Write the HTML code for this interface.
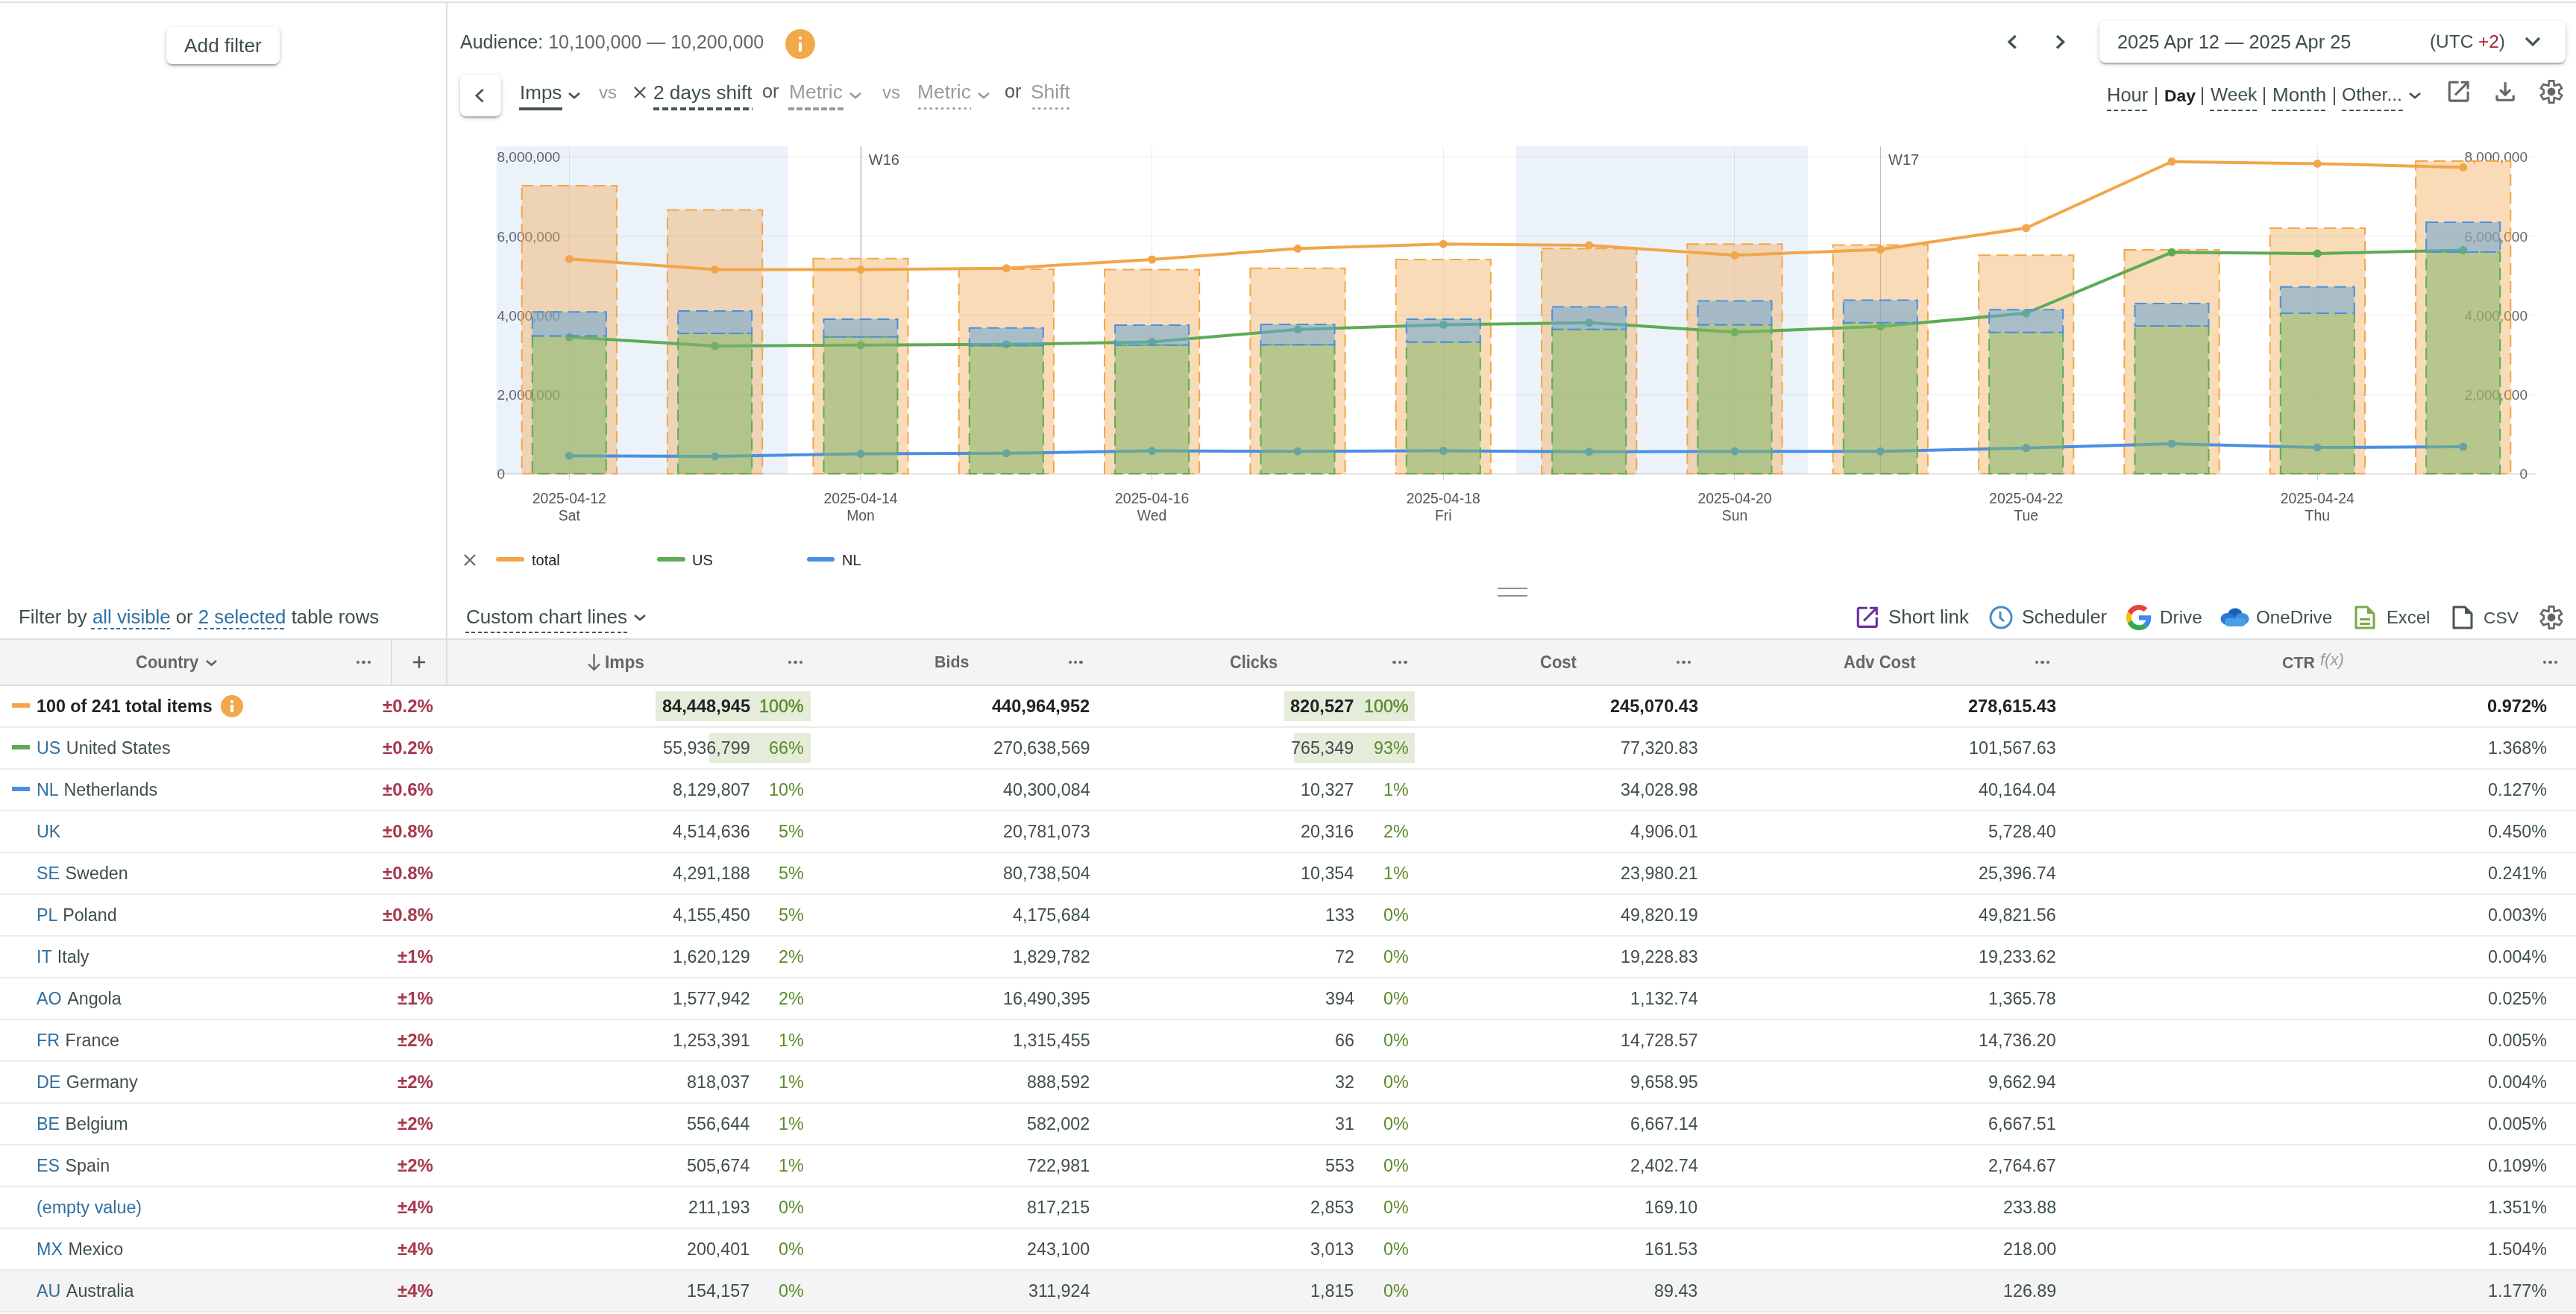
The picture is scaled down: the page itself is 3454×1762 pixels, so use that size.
<!DOCTYPE html>
<html><head><meta charset="utf-8"><style>
html,body{margin:0;padding:0;}
body{width:3454px;height:1762px;overflow:hidden;position:relative;background:#fff;font-family:"Liberation Sans", sans-serif;}
.t{position:absolute;white-space:nowrap;line-height:1;will-change:transform;}
</style></head><body>
<div style="position:absolute;left:0.0px;top:2.0px;width:3454.0px;height:2.0px;background:#dddddd;"></div>
<div style="position:absolute;left:598.0px;top:4.0px;width:2.0px;height:916.0px;background:#dedede;"></div>
<div style="position:absolute;left:223.0px;top:36.0px;width:152.0px;height:50.0px;background:#fff;border-radius:8px;box-shadow:0 2px 6px rgba(0,0,0,.2),0 2px 2px rgba(0,0,0,.14),0 4px 2px -2px rgba(0,0,0,.12);"></div>
<div class="t" style="left:247.0px;top:47.7px;font-size:26.3px;color:#3f4e4e;">Add filter</div>
<div class="t" style="left:616.5px;top:43.8px;font-size:25px;color:#3f4e4e;">Audience: <span style="color:#666">10,100,000 — 10,200,000</span></div>
<div style="position:absolute;left:1053px;top:39px;width:40px;height:40px;border-radius:50%;background:#f2a94a;"></div>
<div style="position:absolute;left:1070.9px;top:56.9px;width:4.2px;height:12.3px;background:#fff;"></div>
<div style="position:absolute;left:1070.9px;top:49px;width:4.2px;height:4.2px;border-radius:50%;background:#fff;"></div>
<svg style="position:absolute;left:2687.7px;top:41.8px" width="20.6" height="28.4"><path d="M14.6,6 L6,14.2 L14.6,22.4" fill="none" stroke="#455454" stroke-width="3.4" stroke-linecap="butt" stroke-linejoin="miter"/></svg>
<svg style="position:absolute;left:2751.7px;top:41.8px" width="20.6" height="28.4"><path d="M6,6 L14.6,14.2 L6,22.4" fill="none" stroke="#455454" stroke-width="3.4" stroke-linecap="butt" stroke-linejoin="miter"/></svg>
<div style="position:absolute;left:2815.0px;top:28.0px;width:625.0px;height:56.0px;background:#fff;border-radius:8px;box-shadow:0 2px 6px rgba(0,0,0,.2),0 2px 2px rgba(0,0,0,.14),0 4px 2px -2px rgba(0,0,0,.12);"></div>
<div class="t" style="left:2839.3px;top:43.5px;font-size:25.4px;color:#3f4e4e;">2025 Apr 12 — 2025 Apr 25</div>
<div class="t" style="left:3258.0px;top:44.3px;font-size:24.4px;color:#3f4e4e;">(UTC <span style="color:#a8202e">+2</span>)</div>
<svg style="position:absolute;left:3381.0px;top:45.0px" width="30" height="21.0"><path d="M6,6 L15,15.0 L24,6" fill="none" stroke="#455454" stroke-width="3.2" stroke-linecap="butt" stroke-linejoin="miter"/></svg>
<div style="position:absolute;left:616.5px;top:100.0px;width:55.0px;height:56.0px;background:#fff;border-radius:8px;box-shadow:0 2px 6px rgba(0,0,0,.2),0 2px 2px rgba(0,0,0,.14),0 4px 2px -2px rgba(0,0,0,.12);"></div>
<svg style="position:absolute;left:633.2px;top:113.8px" width="20.6" height="28.4"><path d="M14.6,6 L6,14.2 L14.6,22.4" fill="none" stroke="#455454" stroke-width="2.8" stroke-linecap="butt" stroke-linejoin="miter"/></svg>
<div class="t" style="left:696.5px;top:110.7px;font-size:26px;color:#3f4e4e;">Imps</div>
<div style="position:absolute;left:696.0px;top:144.2px;width:58.0px;height:3.5px;background:#455454;"></div>
<svg style="position:absolute;left:757.0px;top:118.5px" width="26" height="18"><path d="M6,6 L13,12 L20,6" fill="none" stroke="#455454" stroke-width="2.7" stroke-linecap="butt" stroke-linejoin="miter"/></svg>
<div class="t" style="left:802.8px;top:112.4px;font-size:24px;color:#9a9a9a;">vs</div>
<svg style="position:absolute;left:849px;top:115px" width="18" height="18"><path d="M2,2 L16,16 M16,2 L2,16" stroke="#555" stroke-width="2.4"/></svg>
<div class="t" style="left:876.0px;top:110.5px;font-size:26.2px;color:#3f4e4e;">2 days shift</div>
<div style="position:absolute;left:876.0px;top:144.2px;width:132.6px;height:3.5px;background:repeating-linear-gradient(90deg,#455454 0 8.5px,transparent 8.5px 12.0px);"></div>
<div class="t" style="left:1022.0px;top:109.9px;font-size:25.2px;color:#555;">or</div>
<div class="t" style="left:1058.0px;top:110.3px;font-size:26.4px;color:#9a9a9a;">Metric</div>
<div style="position:absolute;left:1057.0px;top:144.2px;width:74.0px;height:3.5px;background:repeating-linear-gradient(90deg,#9a9a9a 0 8px,transparent 8px 11px);"></div>
<svg style="position:absolute;left:1133.5px;top:118.5px" width="26" height="18"><path d="M6,6 L13,12 L20,6" fill="none" stroke="#9a9a9a" stroke-width="2.7" stroke-linecap="butt" stroke-linejoin="miter"/></svg>
<div class="t" style="left:1183.0px;top:112.4px;font-size:24px;color:#9a9a9a;">vs</div>
<div class="t" style="left:1229.8px;top:110.3px;font-size:26.4px;color:#9a9a9a;">Metric</div>
<div style="position:absolute;left:1229.0px;top:144.4px;width:73.0px;height:3.2px;background-image:radial-gradient(circle,#9a9a9a 1.4px,transparent 1.9px);background-size:7.7px 3.2px;background-repeat:repeat-x;"></div>
<svg style="position:absolute;left:1305.5px;top:118.5px" width="26" height="18"><path d="M6,6 L13,12 L20,6" fill="none" stroke="#9a9a9a" stroke-width="2.7" stroke-linecap="butt" stroke-linejoin="miter"/></svg>
<div class="t" style="left:1347.0px;top:109.9px;font-size:25.2px;color:#555;">or</div>
<div class="t" style="left:1382.0px;top:110.3px;font-size:26.4px;color:#9a9a9a;">Shift</div>
<div style="position:absolute;left:1382.0px;top:144.4px;width:54.0px;height:3.2px;background-image:radial-gradient(circle,#9a9a9a 1.4px,transparent 1.9px);background-size:7.7px 3.2px;background-repeat:repeat-x;"></div>
<div class="t" style="left:2825.4px;top:114.6px;font-size:25.5px;color:#3f4e4e;">Hour</div>
<div style="position:absolute;left:2825.0px;top:147.0px;width:56.0px;height:2.0px;background:repeating-linear-gradient(90deg,#455454 0 6px,transparent 6px 9.5px);"></div>
<div class="t" style="left:2291.0px;width:1200px;text-align:center;top:115.0px;font-size:25px;color:#455454;">|</div>
<div class="t" style="left:2901.5px;top:116.9px;font-size:22.8px;color:#222;font-weight:700;">Day</div>
<div class="t" style="left:2353.0px;width:1200px;text-align:center;top:115.0px;font-size:25px;color:#455454;">|</div>
<div class="t" style="left:2963.7px;top:115.4px;font-size:24.6px;color:#3f4e4e;">Week</div>
<div style="position:absolute;left:2963.0px;top:147.0px;width:64.0px;height:2.0px;background:repeating-linear-gradient(90deg,#455454 0 6px,transparent 6px 9.5px);"></div>
<div class="t" style="left:2436.0px;width:1200px;text-align:center;top:115.0px;font-size:25px;color:#455454;">|</div>
<div class="t" style="left:3046.8px;top:114.2px;font-size:26px;color:#3f4e4e;">Month</div>
<div style="position:absolute;left:3046.0px;top:147.0px;width:74.0px;height:2.0px;background:repeating-linear-gradient(90deg,#455454 0 6px,transparent 6px 9.5px);"></div>
<div class="t" style="left:2530.0px;width:1200px;text-align:center;top:115.0px;font-size:25px;color:#455454;">|</div>
<div class="t" style="left:3140.0px;top:115.3px;font-size:24.7px;color:#3f4e4e;">Other...</div>
<div style="position:absolute;left:3140.0px;top:147.0px;width:82.0px;height:2.0px;background:repeating-linear-gradient(90deg,#455454 0 6px,transparent 6px 9.5px);"></div>
<svg style="position:absolute;left:3225.0px;top:118.5px" width="26" height="18"><path d="M6,6 L13,12 L20,6" fill="none" stroke="#455454" stroke-width="2.7" stroke-linecap="butt" stroke-linejoin="miter"/></svg>
<svg style="position:absolute;left:3278.3px;top:103.9px" width="37.3" height="37.3" viewBox="0 -960 960 960"><path d="M200-120q-33 0-56.5-23.5T120-200v-560q0-33 23.5-56.5T200-840h280v80H200v560h560v-280h80v280q0 33-23.5 56.5T760-120H200Zm188-212-56-56 372-372H560v-80h280v280h-80v-144L388-332Z" fill="#666"/></svg>
<svg style="position:absolute;left:3339.8px;top:103.6px" width="38.2" height="38.2" viewBox="0 -960 960 960"><path d="M480-320 280-520l56-58 104 104v-326h80v326l104-104 56 58-200 200ZM240-160q-33 0-56.5-23.5T160-240v-120h80v120h480v-120h80v120q0 33-23.5 56.5T720-160H240Z" fill="#666"/></svg>
<svg style="position:absolute;left:3400.9px;top:102.8px" width="40" height="40"><path d="M16.90,5.46 L23.13,5.46 L23.77,11.90 L30.87,10.08 L34.06,15.26 L30.31,17.69 L30.31,22.15 L34.09,24.86 L30.87,30.10 L23.78,28.28 L23.13,34.55 L16.90,34.55 L16.25,28.28 L9.16,30.11 L5.92,24.87 L9.73,22.16 L9.73,17.68 L5.96,15.26 L9.16,10.08 L16.26,11.90Z" fill="none" stroke="#666" stroke-width="2.7" stroke-linejoin="miter"/><circle cx="20" cy="20" r="5.4" fill="#666"/></svg>
<svg style="position:absolute;left:0;top:0;will-change:transform" width="3454" height="720" viewBox="0 0 3454 720">
<rect x="665.6" y="196.2" width="390.7" height="439.1" fill="#ebf2fa"/>
<rect x="2033.0" y="196.2" width="390.7" height="439.1" fill="#ebf2fa"/>
<line x1="665.6" y1="635.5" x2="3400.3" y2="635.5" stroke="#000" stroke-opacity="0.17" stroke-width="1.6"/>
<line x1="665.6" y1="529.5" x2="3400.3" y2="529.5" stroke="#000" stroke-opacity="0.085" stroke-width="1.2"/>
<line x1="665.6" y1="422.5" x2="3400.3" y2="422.5" stroke="#000" stroke-opacity="0.085" stroke-width="1.2"/>
<line x1="665.6" y1="316.5" x2="3400.3" y2="316.5" stroke="#000" stroke-opacity="0.085" stroke-width="1.2"/>
<line x1="665.6" y1="210.5" x2="3400.3" y2="210.5" stroke="#000" stroke-opacity="0.085" stroke-width="1.2"/>
<line x1="763.5" y1="196.2" x2="763.5" y2="635.3" stroke="#000" stroke-opacity="0.075" stroke-width="1.1"/>
<line x1="763.5" y1="635.3" x2="763.5" y2="644.5" stroke="#d2d2d2" stroke-width="1.2"/>
<line x1="1153.5" y1="196.2" x2="1153.5" y2="635.3" stroke="#000" stroke-opacity="0.075" stroke-width="1.1"/>
<line x1="1153.5" y1="635.3" x2="1153.5" y2="644.5" stroke="#d2d2d2" stroke-width="1.2"/>
<line x1="1544.5" y1="196.2" x2="1544.5" y2="635.3" stroke="#000" stroke-opacity="0.075" stroke-width="1.1"/>
<line x1="1544.5" y1="635.3" x2="1544.5" y2="644.5" stroke="#d2d2d2" stroke-width="1.2"/>
<line x1="1935.5" y1="196.2" x2="1935.5" y2="635.3" stroke="#000" stroke-opacity="0.075" stroke-width="1.1"/>
<line x1="1935.5" y1="635.3" x2="1935.5" y2="644.5" stroke="#d2d2d2" stroke-width="1.2"/>
<line x1="2325.5" y1="196.2" x2="2325.5" y2="635.3" stroke="#000" stroke-opacity="0.075" stroke-width="1.1"/>
<line x1="2325.5" y1="635.3" x2="2325.5" y2="644.5" stroke="#d2d2d2" stroke-width="1.2"/>
<line x1="2716.5" y1="196.2" x2="2716.5" y2="635.3" stroke="#000" stroke-opacity="0.075" stroke-width="1.1"/>
<line x1="2716.5" y1="635.3" x2="2716.5" y2="644.5" stroke="#d2d2d2" stroke-width="1.2"/>
<line x1="3107.5" y1="196.2" x2="3107.5" y2="635.3" stroke="#000" stroke-opacity="0.075" stroke-width="1.1"/>
<line x1="3107.5" y1="635.3" x2="3107.5" y2="644.5" stroke="#d2d2d2" stroke-width="1.2"/>
<line x1="1154.5" y1="196.2" x2="1154.5" y2="635.3" stroke="#bbbbbb" stroke-width="1.2"/>
<line x1="2521.5" y1="196.2" x2="2521.5" y2="635.3" stroke="#bbbbbb" stroke-width="1.2"/>
<text x="1164.8" y="220.8" font-family='"Liberation Sans", sans-serif' font-size="20" fill="#555">W16</text>
<text x="2532" y="220.8" font-family='"Liberation Sans", sans-serif' font-size="20" fill="#555">W17</text>
<text x="666.5" y="642.4" font-family='"Liberation Sans", sans-serif' font-size="19" fill="#5f6368">0</text>
<text x="3389" y="642.4" text-anchor="end" font-family='"Liberation Sans", sans-serif' font-size="19" fill="#5f6368">0</text>
<text x="666.5" y="536.1" font-family='"Liberation Sans", sans-serif' font-size="19" fill="#5f6368">2,000,000</text>
<text x="3389" y="536.1" text-anchor="end" font-family='"Liberation Sans", sans-serif' font-size="19" fill="#5f6368">2,000,000</text>
<text x="666.5" y="429.9" font-family='"Liberation Sans", sans-serif' font-size="19" fill="#5f6368">4,000,000</text>
<text x="3389" y="429.9" text-anchor="end" font-family='"Liberation Sans", sans-serif' font-size="19" fill="#5f6368">4,000,000</text>
<text x="666.5" y="323.7" font-family='"Liberation Sans", sans-serif' font-size="19" fill="#5f6368">6,000,000</text>
<text x="3389" y="323.7" text-anchor="end" font-family='"Liberation Sans", sans-serif' font-size="19" fill="#5f6368">6,000,000</text>
<text x="666.5" y="217.4" font-family='"Liberation Sans", sans-serif' font-size="19" fill="#5f6368">8,000,000</text>
<text x="3389" y="217.4" text-anchor="end" font-family='"Liberation Sans", sans-serif' font-size="19" fill="#5f6368">8,000,000</text>
<text x="763.3" y="674.7" text-anchor="middle" font-family='"Liberation Sans", sans-serif' font-size="19.4" fill="#555">2025-04-12</text>
<text x="763.3" y="697.6" text-anchor="middle" font-family='"Liberation Sans", sans-serif' font-size="19.4" fill="#555">Sat</text>
<text x="1154.0" y="674.7" text-anchor="middle" font-family='"Liberation Sans", sans-serif' font-size="19.4" fill="#555">2025-04-14</text>
<text x="1154.0" y="697.6" text-anchor="middle" font-family='"Liberation Sans", sans-serif' font-size="19.4" fill="#555">Mon</text>
<text x="1544.6" y="674.7" text-anchor="middle" font-family='"Liberation Sans", sans-serif' font-size="19.4" fill="#555">2025-04-16</text>
<text x="1544.6" y="697.6" text-anchor="middle" font-family='"Liberation Sans", sans-serif' font-size="19.4" fill="#555">Wed</text>
<text x="1935.3" y="674.7" text-anchor="middle" font-family='"Liberation Sans", sans-serif' font-size="19.4" fill="#555">2025-04-18</text>
<text x="1935.3" y="697.6" text-anchor="middle" font-family='"Liberation Sans", sans-serif' font-size="19.4" fill="#555">Fri</text>
<text x="2326.0" y="674.7" text-anchor="middle" font-family='"Liberation Sans", sans-serif' font-size="19.4" fill="#555">2025-04-20</text>
<text x="2326.0" y="697.6" text-anchor="middle" font-family='"Liberation Sans", sans-serif' font-size="19.4" fill="#555">Sun</text>
<text x="2716.7" y="674.7" text-anchor="middle" font-family='"Liberation Sans", sans-serif' font-size="19.4" fill="#555">2025-04-22</text>
<text x="2716.7" y="697.6" text-anchor="middle" font-family='"Liberation Sans", sans-serif' font-size="19.4" fill="#555">Tue</text>
<text x="3107.3" y="674.7" text-anchor="middle" font-family='"Liberation Sans", sans-serif' font-size="19.4" fill="#555">2025-04-24</text>
<text x="3107.3" y="697.6" text-anchor="middle" font-family='"Liberation Sans", sans-serif' font-size="19.4" fill="#555">Thu</text>
<rect x="699.7" y="248.9" width="127.2" height="386.4" fill="#f2a64a" fill-opacity="0.4" stroke="#f2a64a" stroke-width="2" stroke-dasharray="16 8"/>
<rect x="895.0" y="281.4" width="127.2" height="353.9" fill="#f2a64a" fill-opacity="0.4" stroke="#f2a64a" stroke-width="2" stroke-dasharray="16 8"/>
<rect x="1090.4" y="346.7" width="127.2" height="288.6" fill="#f2a64a" fill-opacity="0.4" stroke="#f2a64a" stroke-width="2" stroke-dasharray="16 8"/>
<rect x="1285.7" y="361.0" width="127.2" height="274.3" fill="#f2a64a" fill-opacity="0.4" stroke="#f2a64a" stroke-width="2" stroke-dasharray="16 8"/>
<rect x="1481.0" y="361.4" width="127.2" height="273.9" fill="#f2a64a" fill-opacity="0.4" stroke="#f2a64a" stroke-width="2" stroke-dasharray="16 8"/>
<rect x="1676.4" y="359.7" width="127.2" height="275.6" fill="#f2a64a" fill-opacity="0.4" stroke="#f2a64a" stroke-width="2" stroke-dasharray="16 8"/>
<rect x="1871.7" y="348.0" width="127.2" height="287.3" fill="#f2a64a" fill-opacity="0.4" stroke="#f2a64a" stroke-width="2" stroke-dasharray="16 8"/>
<rect x="2067.1" y="333.3" width="127.2" height="302.0" fill="#f2a64a" fill-opacity="0.4" stroke="#f2a64a" stroke-width="2" stroke-dasharray="16 8"/>
<rect x="2262.4" y="327.2" width="127.2" height="308.1" fill="#f2a64a" fill-opacity="0.4" stroke="#f2a64a" stroke-width="2" stroke-dasharray="16 8"/>
<rect x="2457.7" y="328.6" width="127.2" height="306.7" fill="#f2a64a" fill-opacity="0.4" stroke="#f2a64a" stroke-width="2" stroke-dasharray="16 8"/>
<rect x="2653.1" y="342.3" width="127.2" height="293.0" fill="#f2a64a" fill-opacity="0.4" stroke="#f2a64a" stroke-width="2" stroke-dasharray="16 8"/>
<rect x="2848.4" y="335.0" width="127.2" height="300.3" fill="#f2a64a" fill-opacity="0.4" stroke="#f2a64a" stroke-width="2" stroke-dasharray="16 8"/>
<rect x="3043.8" y="306.1" width="127.2" height="329.2" fill="#f2a64a" fill-opacity="0.4" stroke="#f2a64a" stroke-width="2" stroke-dasharray="16 8"/>
<rect x="3239.1" y="216.1" width="127.2" height="419.2" fill="#f2a64a" fill-opacity="0.4" stroke="#f2a64a" stroke-width="2" stroke-dasharray="16 8"/>
<polyline points="763.3,347.3 958.6,361.4 1154.0,361.4 1349.3,359.7 1544.6,348.0 1740.0,333.3 1935.3,327.2 2130.7,328.9 2326.0,342.3 2521.3,334.6 2716.7,305.8 2912.0,216.7 3107.3,219.4 3302.7,224.4" fill="none" stroke="#f2a64a" stroke-width="4" stroke-linejoin="round"/>
<circle cx="763.3" cy="347.3" r="5.5" fill="#f2a64a"/>
<circle cx="958.6" cy="361.4" r="5.5" fill="#f2a64a"/>
<circle cx="1154.0" cy="361.4" r="5.5" fill="#f2a64a"/>
<circle cx="1349.3" cy="359.7" r="5.5" fill="#f2a64a"/>
<circle cx="1544.6" cy="348.0" r="5.5" fill="#f2a64a"/>
<circle cx="1740.0" cy="333.3" r="5.5" fill="#f2a64a"/>
<circle cx="1935.3" cy="327.2" r="5.5" fill="#f2a64a"/>
<circle cx="2130.7" cy="328.9" r="5.5" fill="#f2a64a"/>
<circle cx="2326.0" cy="342.3" r="5.5" fill="#f2a64a"/>
<circle cx="2521.3" cy="334.6" r="5.5" fill="#f2a64a"/>
<circle cx="2716.7" cy="305.8" r="5.5" fill="#f2a64a"/>
<circle cx="2912.0" cy="216.7" r="5.5" fill="#f2a64a"/>
<circle cx="3107.3" cy="219.4" r="5.5" fill="#f2a64a"/>
<circle cx="3302.7" cy="224.4" r="5.5" fill="#f2a64a"/>
<polyline points="763.3,452.1 958.6,463.9 1154.0,462.8 1349.3,461.8 1544.6,458.5 1740.0,441.8 1935.3,435.4 2130.7,432.7 2326.0,445.4 2521.3,437.7 2716.7,420.0 2912.0,338.3 3107.3,340.0 3302.7,335.6" fill="none" stroke="#5dab57" stroke-width="4" stroke-linejoin="round"/>
<circle cx="763.3" cy="452.1" r="5.5" fill="#5dab57"/>
<circle cx="958.6" cy="463.9" r="5.5" fill="#5dab57"/>
<circle cx="1154.0" cy="462.8" r="5.5" fill="#5dab57"/>
<circle cx="1349.3" cy="461.8" r="5.5" fill="#5dab57"/>
<circle cx="1544.6" cy="458.5" r="5.5" fill="#5dab57"/>
<circle cx="1740.0" cy="441.8" r="5.5" fill="#5dab57"/>
<circle cx="1935.3" cy="435.4" r="5.5" fill="#5dab57"/>
<circle cx="2130.7" cy="432.7" r="5.5" fill="#5dab57"/>
<circle cx="2326.0" cy="445.4" r="5.5" fill="#5dab57"/>
<circle cx="2521.3" cy="437.7" r="5.5" fill="#5dab57"/>
<circle cx="2716.7" cy="420.0" r="5.5" fill="#5dab57"/>
<circle cx="2912.0" cy="338.3" r="5.5" fill="#5dab57"/>
<circle cx="3107.3" cy="340.0" r="5.5" fill="#5dab57"/>
<circle cx="3302.7" cy="335.6" r="5.5" fill="#5dab57"/>
<polyline points="763.3,611.2 958.6,611.9 1154.0,608.5 1349.3,607.8 1544.6,604.5 1740.0,605.2 1935.3,604.5 2130.7,605.8 2326.0,605.2 2521.3,605.2 2716.7,600.8 2912.0,595.1 3107.3,600.1 3302.7,599.1" fill="none" stroke="#4a90e2" stroke-width="4" stroke-linejoin="round"/>
<circle cx="763.3" cy="611.2" r="5.5" fill="#4a90e2"/>
<circle cx="958.6" cy="611.9" r="5.5" fill="#4a90e2"/>
<circle cx="1154.0" cy="608.5" r="5.5" fill="#4a90e2"/>
<circle cx="1349.3" cy="607.8" r="5.5" fill="#4a90e2"/>
<circle cx="1544.6" cy="604.5" r="5.5" fill="#4a90e2"/>
<circle cx="1740.0" cy="605.2" r="5.5" fill="#4a90e2"/>
<circle cx="1935.3" cy="604.5" r="5.5" fill="#4a90e2"/>
<circle cx="2130.7" cy="605.8" r="5.5" fill="#4a90e2"/>
<circle cx="2326.0" cy="605.2" r="5.5" fill="#4a90e2"/>
<circle cx="2521.3" cy="605.2" r="5.5" fill="#4a90e2"/>
<circle cx="2716.7" cy="600.8" r="5.5" fill="#4a90e2"/>
<circle cx="2912.0" cy="595.1" r="5.5" fill="#4a90e2"/>
<circle cx="3107.3" cy="600.1" r="5.5" fill="#4a90e2"/>
<circle cx="3302.7" cy="599.1" r="5.5" fill="#4a90e2"/>
<rect x="713.8" y="450.5" width="99" height="184.8" fill="#82b66c" fill-opacity="0.55" stroke="#5dab57" stroke-width="2" stroke-dasharray="16 8"/>
<rect x="713.8" y="418.3" width="99" height="32.2" fill="#6aa5d4" fill-opacity="0.55" stroke="#4a90e2" stroke-width="2" stroke-dasharray="16 8"/>
<rect x="909.1" y="447.1" width="99" height="188.2" fill="#82b66c" fill-opacity="0.55" stroke="#5dab57" stroke-width="2" stroke-dasharray="16 8"/>
<rect x="909.1" y="417.0" width="99" height="30.1" fill="#6aa5d4" fill-opacity="0.55" stroke="#4a90e2" stroke-width="2" stroke-dasharray="16 8"/>
<rect x="1104.5" y="451.8" width="99" height="183.5" fill="#82b66c" fill-opacity="0.55" stroke="#5dab57" stroke-width="2" stroke-dasharray="16 8"/>
<rect x="1104.5" y="428.0" width="99" height="23.8" fill="#6aa5d4" fill-opacity="0.55" stroke="#4a90e2" stroke-width="2" stroke-dasharray="16 8"/>
<rect x="1299.8" y="463.5" width="99" height="171.8" fill="#82b66c" fill-opacity="0.55" stroke="#5dab57" stroke-width="2" stroke-dasharray="16 8"/>
<rect x="1299.8" y="439.7" width="99" height="23.8" fill="#6aa5d4" fill-opacity="0.55" stroke="#4a90e2" stroke-width="2" stroke-dasharray="16 8"/>
<rect x="1495.1" y="462.8" width="99" height="172.5" fill="#82b66c" fill-opacity="0.55" stroke="#5dab57" stroke-width="2" stroke-dasharray="16 8"/>
<rect x="1495.1" y="436.0" width="99" height="26.8" fill="#6aa5d4" fill-opacity="0.55" stroke="#4a90e2" stroke-width="2" stroke-dasharray="16 8"/>
<rect x="1690.5" y="462.2" width="99" height="173.1" fill="#82b66c" fill-opacity="0.55" stroke="#5dab57" stroke-width="2" stroke-dasharray="16 8"/>
<rect x="1690.5" y="435.0" width="99" height="27.2" fill="#6aa5d4" fill-opacity="0.55" stroke="#4a90e2" stroke-width="2" stroke-dasharray="16 8"/>
<rect x="1885.8" y="458.8" width="99" height="176.5" fill="#82b66c" fill-opacity="0.55" stroke="#5dab57" stroke-width="2" stroke-dasharray="16 8"/>
<rect x="1885.8" y="428.0" width="99" height="30.8" fill="#6aa5d4" fill-opacity="0.55" stroke="#4a90e2" stroke-width="2" stroke-dasharray="16 8"/>
<rect x="2081.2" y="441.8" width="99" height="193.5" fill="#82b66c" fill-opacity="0.55" stroke="#5dab57" stroke-width="2" stroke-dasharray="16 8"/>
<rect x="2081.2" y="411.6" width="99" height="30.2" fill="#6aa5d4" fill-opacity="0.55" stroke="#4a90e2" stroke-width="2" stroke-dasharray="16 8"/>
<rect x="2276.5" y="435.4" width="99" height="199.9" fill="#82b66c" fill-opacity="0.55" stroke="#5dab57" stroke-width="2" stroke-dasharray="16 8"/>
<rect x="2276.5" y="403.6" width="99" height="31.8" fill="#6aa5d4" fill-opacity="0.55" stroke="#4a90e2" stroke-width="2" stroke-dasharray="16 8"/>
<rect x="2471.8" y="432.7" width="99" height="202.6" fill="#82b66c" fill-opacity="0.55" stroke="#5dab57" stroke-width="2" stroke-dasharray="16 8"/>
<rect x="2471.8" y="402.6" width="99" height="30.1" fill="#6aa5d4" fill-opacity="0.55" stroke="#4a90e2" stroke-width="2" stroke-dasharray="16 8"/>
<rect x="2667.2" y="445.8" width="99" height="189.5" fill="#82b66c" fill-opacity="0.55" stroke="#5dab57" stroke-width="2" stroke-dasharray="16 8"/>
<rect x="2667.2" y="415.3" width="99" height="30.5" fill="#6aa5d4" fill-opacity="0.55" stroke="#4a90e2" stroke-width="2" stroke-dasharray="16 8"/>
<rect x="2862.5" y="437.0" width="99" height="198.3" fill="#82b66c" fill-opacity="0.55" stroke="#5dab57" stroke-width="2" stroke-dasharray="16 8"/>
<rect x="2862.5" y="407.0" width="99" height="30.0" fill="#6aa5d4" fill-opacity="0.55" stroke="#4a90e2" stroke-width="2" stroke-dasharray="16 8"/>
<rect x="3057.8" y="420.0" width="99" height="215.3" fill="#82b66c" fill-opacity="0.55" stroke="#5dab57" stroke-width="2" stroke-dasharray="16 8"/>
<rect x="3057.8" y="384.8" width="99" height="35.2" fill="#6aa5d4" fill-opacity="0.55" stroke="#4a90e2" stroke-width="2" stroke-dasharray="16 8"/>
<rect x="3253.2" y="338.0" width="99" height="297.3" fill="#82b66c" fill-opacity="0.55" stroke="#5dab57" stroke-width="2" stroke-dasharray="16 8"/>
<rect x="3253.2" y="298.1" width="99" height="39.9" fill="#6aa5d4" fill-opacity="0.55" stroke="#4a90e2" stroke-width="2" stroke-dasharray="16 8"/>
</svg>
<svg style="position:absolute;left:621px;top:742px" width="18" height="18"><path d="M2,2 L16,16 M16,2 L2,16" stroke="#666" stroke-width="2.2"/></svg>
<div style="position:absolute;left:665.2px;top:747.3px;width:37.5px;height:6.0px;background:#f2a64a;border-radius:3px;"></div>
<div class="t" style="left:713.0px;top:740.8px;font-size:20px;color:#222;">total</div>
<div style="position:absolute;left:881.4px;top:747.3px;width:37.5px;height:6.0px;background:#5dab57;border-radius:3px;"></div>
<div class="t" style="left:928.4px;top:740.8px;font-size:20px;color:#222;">US</div>
<div style="position:absolute;left:1081.7px;top:747.3px;width:37.5px;height:6.0px;background:#4a90e2;border-radius:3px;"></div>
<div class="t" style="left:1129.2px;top:740.8px;font-size:20px;color:#222;">NL</div>
<div style="position:absolute;left:2008.0px;top:788.0px;width:40.0px;height:2.0px;background:#909090;"></div>
<div style="position:absolute;left:2008.0px;top:798.0px;width:40.0px;height:2.0px;background:#909090;"></div>
<div class="t" style="left:25.2px;top:814.8px;font-size:25.8px;color:#3f4e4e;">Filter by <span style="color:#2f6fa0">all visible</span> or <span style="color:#2f6fa0">2 selected</span> table rows</div>
<div style="position:absolute;left:121.5px;top:841.8px;width:106.5px;height:2.2px;background:repeating-linear-gradient(90deg,#2f6fa0 0 5px,transparent 5px 8.5px);"></div>
<div style="position:absolute;left:264.5px;top:841.8px;width:119.5px;height:2.2px;background:repeating-linear-gradient(90deg,#2f6fa0 0 5px,transparent 5px 8.5px);"></div>
<div class="t" style="left:624.5px;top:813.7px;font-size:26.1px;color:#3f4e4e;">Custom chart lines</div>
<div style="position:absolute;left:624.0px;top:846.5px;width:218.0px;height:2.2px;background:repeating-linear-gradient(90deg,#455454 0 5px,transparent 5px 8.5px);"></div>
<svg style="position:absolute;left:844.7px;top:818.8px" width="26" height="18"><path d="M6,6 L13,12 L20,6" fill="none" stroke="#455454" stroke-width="2.7" stroke-linecap="butt" stroke-linejoin="miter"/></svg>
<svg style="position:absolute;left:2485.3px;top:808.9px" width="37.6" height="37.6" viewBox="0 -960 960 960"><path d="M200-120q-33 0-56.5-23.5T120-200v-560q0-33 23.5-56.5T200-840h280v80H200v560h560v-280h80v280q0 33-23.5 56.5T760-120H200Zm188-212-56-56 372-372H560v-80h280v280h-80v-144L388-332Z" fill="#6b2f9e"/></svg>
<div class="t" style="left:2532.2px;top:814.6px;font-size:25.9px;color:#3f4e4e;">Short link</div>
<svg style="position:absolute;left:2667px;top:812px" width="32" height="32" viewBox="0 0 32 32">
<circle cx="16" cy="16" r="14" fill="none" stroke="#4a8cc6" stroke-width="3"/>
<path d="M15,8 V16.5 L20,21" fill="none" stroke="#4a8cc6" stroke-width="3"/></svg>
<div class="t" style="left:2711.0px;top:815.1px;font-size:25.3px;color:#3f4e4e;">Scheduler</div>
<svg style="position:absolute;left:2851px;top:811px" width="34" height="34" viewBox="0 0 48 48">
<path fill="#EA4335" d="M24 9.5c3.54 0 6.71 1.22 9.21 3.6l6.85-6.85C35.9 2.38 30.47 0 24 0 14.62 0 6.51 5.38 2.56 13.22l7.98 6.19C12.43 13.72 17.74 9.5 24 9.5z"/>
<path fill="#4285F4" d="M46.98 24.55c0-1.57-.15-3.09-.38-4.55H24v9.02h12.94c-.58 2.96-2.26 5.48-4.78 7.18l7.73 6c4.51-4.18 7.09-10.36 7.09-17.65z"/>
<path fill="#FBBC05" d="M10.53 28.59c-.48-1.45-.76-2.99-.76-4.59s.27-3.14.76-4.59l-7.98-6.19C.92 16.46 0 20.12 0 24c0 3.88.92 7.54 2.56 10.78l7.97-6.19z"/>
<path fill="#34A853" d="M24 48c6.48 0 11.93-2.13 15.89-5.81l-7.73-6c-2.15 1.45-4.92 2.3-8.16 2.3-6.26 0-11.57-4.22-13.47-9.91l-7.98 6.19C6.51 42.62 14.62 48 24 48z"/></svg>
<div class="t" style="left:2896.3px;top:815.9px;font-size:24.3px;color:#3f4e4e;">Drive</div>
<svg style="position:absolute;left:2977px;top:815px" width="40" height="26" viewBox="0 0 40 26">
<ellipse cx="20" cy="10" rx="10" ry="9.5" fill="#1e5fb8"/>
<ellipse cx="10" cy="15" rx="9.5" ry="8" fill="#2a78d4"/>
<ellipse cx="29" cy="15" rx="9.5" ry="8" fill="#3d8fe0"/>
<rect x="6" y="14" width="28" height="11" rx="5" fill="#4aa0e6"/></svg>
<div class="t" style="left:3024.8px;top:816.0px;font-size:24.2px;color:#3f4e4e;">OneDrive</div>
<svg style="position:absolute;left:3157px;top:812px" width="28" height="32" viewBox="0 0 28 32">
<path d="M2,2 H17 L26,11 V30 H2 Z" fill="none" stroke="#7aa84a" stroke-width="3" stroke-linejoin="round"/>
<path d="M17,2 V11 H26 Z" fill="#7aa84a"/>
<rect x="7" y="17" width="14" height="3" fill="#7aa84a"/><rect x="7" y="23" width="14" height="3" fill="#7aa84a"/></svg>
<div class="t" style="left:3199.5px;top:816.3px;font-size:23.8px;color:#3f4e4e;">Excel</div>
<svg style="position:absolute;left:3288px;top:812px" width="28" height="32" viewBox="0 0 28 32">
<path d="M2,2 H17 L26,11 V30 H2 Z" fill="none" stroke="#455454" stroke-width="3" stroke-linejoin="round"/>
<path d="M17,2 V11 H26 Z" fill="#455454"/></svg>
<div class="t" style="left:3330.2px;top:817.2px;font-size:22.8px;color:#3f4e4e;">CSV</div>
<svg style="position:absolute;left:3400.9px;top:807.9px" width="40" height="40"><path d="M16.90,5.46 L23.13,5.46 L23.77,11.90 L30.87,10.08 L34.06,15.26 L30.31,17.69 L30.31,22.15 L34.09,24.86 L30.87,30.10 L23.78,28.28 L23.13,34.55 L16.90,34.55 L16.25,28.28 L9.16,30.11 L5.92,24.87 L9.73,22.16 L9.73,17.68 L5.96,15.26 L9.16,10.08 L16.26,11.90Z" fill="none" stroke="#666" stroke-width="2.7" stroke-linejoin="miter"/><circle cx="20" cy="20" r="5.4" fill="#666"/></svg>
<div style="position:absolute;left:0.0px;top:856.0px;width:3454.0px;height:2.0px;background:#dedede;"></div>
<div style="position:absolute;left:0.0px;top:858.0px;width:3454.0px;height:60.0px;background:#f4f4f4;"></div>
<div style="position:absolute;left:0.0px;top:918.0px;width:3454.0px;height:2.0px;background:#dedede;"></div>
<div style="position:absolute;left:524.0px;top:858.0px;width:2.0px;height:60.0px;background:#dedede;"></div>
<div style="position:absolute;left:598.0px;top:858.0px;width:2.0px;height:60.0px;background:#dedede;"></div>
<div class="t" style="left:181.5px;top:877.9px;font-size:22px;color:#666;font-weight:700;transform:scaleY(1.07);transform-origin:0 84.67%;">Country</div>
<svg style="position:absolute;left:270.5px;top:880.2px" width="25.0" height="17.6"><path d="M6,6 L12.5,11.6 L19.0,6" fill="none" stroke="#666" stroke-width="2.8" stroke-linecap="butt" stroke-linejoin="miter"/></svg>
<div style="position:absolute;left:478.0px;top:885.8px;width:4.4px;height:4.4px;border-radius:50%;background:#666;"></div>
<div style="position:absolute;left:485.4px;top:885.8px;width:4.4px;height:4.4px;border-radius:50%;background:#666;"></div>
<div style="position:absolute;left:492.8px;top:885.8px;width:4.4px;height:4.4px;border-radius:50%;background:#666;"></div>
<svg style="position:absolute;left:554px;top:880px" width="16" height="16"><path d="M8,0 V16 M0,8 H16" stroke="#555" stroke-width="2.4"/></svg>
<svg style="position:absolute;left:787px;top:875.5px" width="19" height="24" viewBox="0 0 19 24"><path d="M9.5,1 V22.5 M2,14.5 L9.5,22 L17,14.5" fill="none" stroke="#666" stroke-width="2.3"/></svg>
<div class="t" style="left:810.5px;top:877.3px;font-size:22.7px;color:#666;font-weight:700;transform:scaleY(1.07);transform-origin:0 84.67%;">Imps</div>
<div style="position:absolute;left:1057.0px;top:885.8px;width:4.4px;height:4.4px;border-radius:50%;background:#666;"></div>
<div style="position:absolute;left:1064.4px;top:885.8px;width:4.4px;height:4.4px;border-radius:50%;background:#666;"></div>
<div style="position:absolute;left:1071.8px;top:885.8px;width:4.4px;height:4.4px;border-radius:50%;background:#666;"></div>
<div class="t" style="left:1253.4px;top:878.4px;font-size:21.4px;color:#666;font-weight:700;transform:scaleY(1.07);transform-origin:0 84.67%;">Bids</div>
<div style="position:absolute;left:1432.6px;top:885.8px;width:4.4px;height:4.4px;border-radius:50%;background:#666;"></div>
<div style="position:absolute;left:1440.0px;top:885.8px;width:4.4px;height:4.4px;border-radius:50%;background:#666;"></div>
<div style="position:absolute;left:1447.4px;top:885.8px;width:4.4px;height:4.4px;border-radius:50%;background:#666;"></div>
<div class="t" style="left:1649.4px;top:878.0px;font-size:21.8px;color:#666;font-weight:700;transform:scaleY(1.07);transform-origin:0 84.67%;">Clicks</div>
<div style="position:absolute;left:1867.4px;top:885.8px;width:4.4px;height:4.4px;border-radius:50%;background:#666;"></div>
<div style="position:absolute;left:1874.8px;top:885.8px;width:4.4px;height:4.4px;border-radius:50%;background:#666;"></div>
<div style="position:absolute;left:1882.2px;top:885.8px;width:4.4px;height:4.4px;border-radius:50%;background:#666;"></div>
<div class="t" style="left:2064.9px;top:877.9px;font-size:22px;color:#666;font-weight:700;transform:scaleY(1.07);transform-origin:0 84.67%;">Cost</div>
<div style="position:absolute;left:2248.0px;top:885.8px;width:4.4px;height:4.4px;border-radius:50%;background:#666;"></div>
<div style="position:absolute;left:2255.4px;top:885.8px;width:4.4px;height:4.4px;border-radius:50%;background:#666;"></div>
<div style="position:absolute;left:2262.8px;top:885.8px;width:4.4px;height:4.4px;border-radius:50%;background:#666;"></div>
<div class="t" style="left:2471.7px;top:877.9px;font-size:22px;color:#666;font-weight:700;transform:scaleY(1.07);transform-origin:0 84.67%;">Adv Cost</div>
<div style="position:absolute;left:2729.0px;top:885.8px;width:4.4px;height:4.4px;border-radius:50%;background:#666;"></div>
<div style="position:absolute;left:2736.4px;top:885.8px;width:4.4px;height:4.4px;border-radius:50%;background:#666;"></div>
<div style="position:absolute;left:2743.8px;top:885.8px;width:4.4px;height:4.4px;border-radius:50%;background:#666;"></div>
<div class="t" style="left:3060.4px;top:878.5px;font-size:21.3px;color:#666;font-weight:700;transform:scaleY(1.07);transform-origin:0 84.67%;">CTR</div>
<div class="t" style="left:3110.5px;top:873.9px;font-size:22px;color:#999;font-style:italic;">f(x)</div>
<div style="position:absolute;left:3410.0px;top:885.8px;width:4.4px;height:4.4px;border-radius:50%;background:#666;"></div>
<div style="position:absolute;left:3417.4px;top:885.8px;width:4.4px;height:4.4px;border-radius:50%;background:#666;"></div>
<div style="position:absolute;left:3424.8px;top:885.8px;width:4.4px;height:4.4px;border-radius:50%;background:#666;"></div>
<div style="position:absolute;left:0.0px;top:974.0px;width:3454.0px;height:2.0px;background:#ebebeb;"></div>
<div style="position:absolute;left:879.0px;top:927.0px;width:208.0px;height:39.6px;background:#e5ecd9;"></div>
<div style="position:absolute;left:1722.0px;top:927.0px;width:175.0px;height:39.6px;background:#e5ecd9;"></div>
<div style="position:absolute;left:15.8px;top:942.6px;width:24.2px;height:6.5px;background:#f2a64a;"></div>
<div class="t" style="left:48.9px;top:935.8px;font-size:23.3px;color:#222;font-weight:700;">100 of 241 total items</div>
<div style="position:absolute;left:295.8px;top:932px;width:30px;height:30px;border-radius:50%;background:#f2a94a;"></div>
<div style="position:absolute;left:309.1px;top:945.0px;width:3.9px;height:9.6px;background:#fff;"></div>
<div style="position:absolute;left:309.2px;top:939.2px;width:3.6px;height:3.6px;border-radius:50%;background:#fff;"></div>
<div class="t" style="right:2873.0px;text-align:right;top:935.2px;font-size:24px;color:#a8384e;font-weight:700;">±0.2%</div>
<div class="t" style="right:2448.4px;text-align:right;top:935.5px;font-size:23.6px;color:#222;font-weight:700;">84,448,945</div>
<div class="t" style="right:2376.0px;text-align:right;top:935.8px;font-size:23.3px;color:#5b8a2a;-webkit-text-stroke:0.45px #5b8a2a;">100%</div>
<div class="t" style="right:1992.5px;text-align:right;top:935.5px;font-size:23.6px;color:#222;font-weight:700;">440,964,952</div>
<div class="t" style="right:1638.5px;text-align:right;top:935.5px;font-size:23.6px;color:#222;font-weight:700;">820,527</div>
<div class="t" style="right:1565.5px;text-align:right;top:935.8px;font-size:23.3px;color:#5b8a2a;-webkit-text-stroke:0.45px #5b8a2a;">100%</div>
<div class="t" style="right:1177.3px;text-align:right;top:935.5px;font-size:23.6px;color:#222;font-weight:700;">245,070.43</div>
<div class="t" style="right:697.0px;text-align:right;top:935.5px;font-size:23.6px;color:#222;font-weight:700;">278,615.43</div>
<div class="t" style="right:38.7px;text-align:right;top:935.5px;font-size:23.6px;color:#222;font-weight:700;">0.972%</div>
<div style="position:absolute;left:0.0px;top:1030.0px;width:3454.0px;height:2.0px;background:#ebebeb;"></div>
<div style="position:absolute;left:951.0px;top:983.0px;width:136.0px;height:39.6px;background:#e5ecd9;"></div>
<div style="position:absolute;left:1735.0px;top:983.0px;width:162.0px;height:39.6px;background:#e5ecd9;"></div>
<div style="position:absolute;left:15.8px;top:998.6px;width:24.2px;height:6.5px;background:#5dab57;"></div>
<div class="t" style="left:48.9px;top:991.8px;font-size:23.3px;color:#3f4e4e;"><span style="color:#2f6fa0">US</span> <span style="color:#3f4e4e;margin-left:1px">United States</span></div>
<div class="t" style="right:2873.0px;text-align:right;top:991.2px;font-size:24px;color:#a8384e;font-weight:700;">±0.2%</div>
<div class="t" style="right:2448.4px;text-align:right;top:991.8px;font-size:23.3px;color:#3f4e4e;">55,936,799</div>
<div class="t" style="right:2376.0px;text-align:right;top:991.8px;font-size:23.3px;color:#5b8a2a;">66%</div>
<div class="t" style="right:1992.5px;text-align:right;top:991.8px;font-size:23.3px;color:#3f4e4e;">270,638,569</div>
<div class="t" style="right:1638.5px;text-align:right;top:991.8px;font-size:23.3px;color:#3f4e4e;">765,349</div>
<div class="t" style="right:1565.5px;text-align:right;top:991.8px;font-size:23.3px;color:#5b8a2a;">93%</div>
<div class="t" style="right:1177.3px;text-align:right;top:991.8px;font-size:23.3px;color:#3f4e4e;">77,320.83</div>
<div class="t" style="right:697.0px;text-align:right;top:991.8px;font-size:23.3px;color:#3f4e4e;">101,567.63</div>
<div class="t" style="right:38.7px;text-align:right;top:991.8px;font-size:23.3px;color:#3f4e4e;">1.368%</div>
<div style="position:absolute;left:0.0px;top:1086.0px;width:3454.0px;height:2.0px;background:#ebebeb;"></div>
<div style="position:absolute;left:15.8px;top:1054.6px;width:24.2px;height:6.5px;background:#4a90e2;"></div>
<div class="t" style="left:48.9px;top:1047.8px;font-size:23.3px;color:#3f4e4e;"><span style="color:#2f6fa0">NL</span> <span style="color:#3f4e4e;margin-left:1px">Netherlands</span></div>
<div class="t" style="right:2873.0px;text-align:right;top:1047.2px;font-size:24px;color:#a8384e;font-weight:700;">±0.6%</div>
<div class="t" style="right:2448.4px;text-align:right;top:1047.8px;font-size:23.3px;color:#3f4e4e;">8,129,807</div>
<div class="t" style="right:2376.0px;text-align:right;top:1047.8px;font-size:23.3px;color:#5b8a2a;">10%</div>
<div class="t" style="right:1992.5px;text-align:right;top:1047.8px;font-size:23.3px;color:#3f4e4e;">40,300,084</div>
<div class="t" style="right:1638.5px;text-align:right;top:1047.8px;font-size:23.3px;color:#3f4e4e;">10,327</div>
<div class="t" style="right:1565.5px;text-align:right;top:1047.8px;font-size:23.3px;color:#5b8a2a;">1%</div>
<div class="t" style="right:1177.3px;text-align:right;top:1047.8px;font-size:23.3px;color:#3f4e4e;">34,028.98</div>
<div class="t" style="right:697.0px;text-align:right;top:1047.8px;font-size:23.3px;color:#3f4e4e;">40,164.04</div>
<div class="t" style="right:38.7px;text-align:right;top:1047.8px;font-size:23.3px;color:#3f4e4e;">0.127%</div>
<div style="position:absolute;left:0.0px;top:1142.0px;width:3454.0px;height:2.0px;background:#ebebeb;"></div>
<div class="t" style="left:48.9px;top:1103.8px;font-size:23.3px;color:#3f4e4e;"><span style="color:#2f6fa0">UK</span></div>
<div class="t" style="right:2873.0px;text-align:right;top:1103.2px;font-size:24px;color:#a8384e;font-weight:700;">±0.8%</div>
<div class="t" style="right:2448.4px;text-align:right;top:1103.8px;font-size:23.3px;color:#3f4e4e;">4,514,636</div>
<div class="t" style="right:2376.0px;text-align:right;top:1103.8px;font-size:23.3px;color:#5b8a2a;">5%</div>
<div class="t" style="right:1992.5px;text-align:right;top:1103.8px;font-size:23.3px;color:#3f4e4e;">20,781,073</div>
<div class="t" style="right:1638.5px;text-align:right;top:1103.8px;font-size:23.3px;color:#3f4e4e;">20,316</div>
<div class="t" style="right:1565.5px;text-align:right;top:1103.8px;font-size:23.3px;color:#5b8a2a;">2%</div>
<div class="t" style="right:1177.3px;text-align:right;top:1103.8px;font-size:23.3px;color:#3f4e4e;">4,906.01</div>
<div class="t" style="right:697.0px;text-align:right;top:1103.8px;font-size:23.3px;color:#3f4e4e;">5,728.40</div>
<div class="t" style="right:38.7px;text-align:right;top:1103.8px;font-size:23.3px;color:#3f4e4e;">0.450%</div>
<div style="position:absolute;left:0.0px;top:1198.0px;width:3454.0px;height:2.0px;background:#ebebeb;"></div>
<div class="t" style="left:48.9px;top:1159.8px;font-size:23.3px;color:#3f4e4e;"><span style="color:#2f6fa0">SE</span> <span style="color:#3f4e4e;margin-left:1px">Sweden</span></div>
<div class="t" style="right:2873.0px;text-align:right;top:1159.2px;font-size:24px;color:#a8384e;font-weight:700;">±0.8%</div>
<div class="t" style="right:2448.4px;text-align:right;top:1159.8px;font-size:23.3px;color:#3f4e4e;">4,291,188</div>
<div class="t" style="right:2376.0px;text-align:right;top:1159.8px;font-size:23.3px;color:#5b8a2a;">5%</div>
<div class="t" style="right:1992.5px;text-align:right;top:1159.8px;font-size:23.3px;color:#3f4e4e;">80,738,504</div>
<div class="t" style="right:1638.5px;text-align:right;top:1159.8px;font-size:23.3px;color:#3f4e4e;">10,354</div>
<div class="t" style="right:1565.5px;text-align:right;top:1159.8px;font-size:23.3px;color:#5b8a2a;">1%</div>
<div class="t" style="right:1177.3px;text-align:right;top:1159.8px;font-size:23.3px;color:#3f4e4e;">23,980.21</div>
<div class="t" style="right:697.0px;text-align:right;top:1159.8px;font-size:23.3px;color:#3f4e4e;">25,396.74</div>
<div class="t" style="right:38.7px;text-align:right;top:1159.8px;font-size:23.3px;color:#3f4e4e;">0.241%</div>
<div style="position:absolute;left:0.0px;top:1254.0px;width:3454.0px;height:2.0px;background:#ebebeb;"></div>
<div class="t" style="left:48.9px;top:1215.8px;font-size:23.3px;color:#3f4e4e;"><span style="color:#2f6fa0">PL</span> <span style="color:#3f4e4e;margin-left:1px">Poland</span></div>
<div class="t" style="right:2873.0px;text-align:right;top:1215.2px;font-size:24px;color:#a8384e;font-weight:700;">±0.8%</div>
<div class="t" style="right:2448.4px;text-align:right;top:1215.8px;font-size:23.3px;color:#3f4e4e;">4,155,450</div>
<div class="t" style="right:2376.0px;text-align:right;top:1215.8px;font-size:23.3px;color:#5b8a2a;">5%</div>
<div class="t" style="right:1992.5px;text-align:right;top:1215.8px;font-size:23.3px;color:#3f4e4e;">4,175,684</div>
<div class="t" style="right:1638.5px;text-align:right;top:1215.8px;font-size:23.3px;color:#3f4e4e;">133</div>
<div class="t" style="right:1565.5px;text-align:right;top:1215.8px;font-size:23.3px;color:#5b8a2a;">0%</div>
<div class="t" style="right:1177.3px;text-align:right;top:1215.8px;font-size:23.3px;color:#3f4e4e;">49,820.19</div>
<div class="t" style="right:697.0px;text-align:right;top:1215.8px;font-size:23.3px;color:#3f4e4e;">49,821.56</div>
<div class="t" style="right:38.7px;text-align:right;top:1215.8px;font-size:23.3px;color:#3f4e4e;">0.003%</div>
<div style="position:absolute;left:0.0px;top:1310.0px;width:3454.0px;height:2.0px;background:#ebebeb;"></div>
<div class="t" style="left:48.9px;top:1271.8px;font-size:23.3px;color:#3f4e4e;"><span style="color:#2f6fa0">IT</span> <span style="color:#3f4e4e;margin-left:1px">Italy</span></div>
<div class="t" style="right:2873.0px;text-align:right;top:1271.2px;font-size:24px;color:#a8384e;font-weight:700;">±1%</div>
<div class="t" style="right:2448.4px;text-align:right;top:1271.8px;font-size:23.3px;color:#3f4e4e;">1,620,129</div>
<div class="t" style="right:2376.0px;text-align:right;top:1271.8px;font-size:23.3px;color:#5b8a2a;">2%</div>
<div class="t" style="right:1992.5px;text-align:right;top:1271.8px;font-size:23.3px;color:#3f4e4e;">1,829,782</div>
<div class="t" style="right:1638.5px;text-align:right;top:1271.8px;font-size:23.3px;color:#3f4e4e;">72</div>
<div class="t" style="right:1565.5px;text-align:right;top:1271.8px;font-size:23.3px;color:#5b8a2a;">0%</div>
<div class="t" style="right:1177.3px;text-align:right;top:1271.8px;font-size:23.3px;color:#3f4e4e;">19,228.83</div>
<div class="t" style="right:697.0px;text-align:right;top:1271.8px;font-size:23.3px;color:#3f4e4e;">19,233.62</div>
<div class="t" style="right:38.7px;text-align:right;top:1271.8px;font-size:23.3px;color:#3f4e4e;">0.004%</div>
<div style="position:absolute;left:0.0px;top:1366.0px;width:3454.0px;height:2.0px;background:#ebebeb;"></div>
<div class="t" style="left:48.9px;top:1327.8px;font-size:23.3px;color:#3f4e4e;"><span style="color:#2f6fa0">AO</span> <span style="color:#3f4e4e;margin-left:1px">Angola</span></div>
<div class="t" style="right:2873.0px;text-align:right;top:1327.2px;font-size:24px;color:#a8384e;font-weight:700;">±1%</div>
<div class="t" style="right:2448.4px;text-align:right;top:1327.8px;font-size:23.3px;color:#3f4e4e;">1,577,942</div>
<div class="t" style="right:2376.0px;text-align:right;top:1327.8px;font-size:23.3px;color:#5b8a2a;">2%</div>
<div class="t" style="right:1992.5px;text-align:right;top:1327.8px;font-size:23.3px;color:#3f4e4e;">16,490,395</div>
<div class="t" style="right:1638.5px;text-align:right;top:1327.8px;font-size:23.3px;color:#3f4e4e;">394</div>
<div class="t" style="right:1565.5px;text-align:right;top:1327.8px;font-size:23.3px;color:#5b8a2a;">0%</div>
<div class="t" style="right:1177.3px;text-align:right;top:1327.8px;font-size:23.3px;color:#3f4e4e;">1,132.74</div>
<div class="t" style="right:697.0px;text-align:right;top:1327.8px;font-size:23.3px;color:#3f4e4e;">1,365.78</div>
<div class="t" style="right:38.7px;text-align:right;top:1327.8px;font-size:23.3px;color:#3f4e4e;">0.025%</div>
<div style="position:absolute;left:0.0px;top:1422.0px;width:3454.0px;height:2.0px;background:#ebebeb;"></div>
<div class="t" style="left:48.9px;top:1383.8px;font-size:23.3px;color:#3f4e4e;"><span style="color:#2f6fa0">FR</span> <span style="color:#3f4e4e;margin-left:1px">France</span></div>
<div class="t" style="right:2873.0px;text-align:right;top:1383.2px;font-size:24px;color:#a8384e;font-weight:700;">±2%</div>
<div class="t" style="right:2448.4px;text-align:right;top:1383.8px;font-size:23.3px;color:#3f4e4e;">1,253,391</div>
<div class="t" style="right:2376.0px;text-align:right;top:1383.8px;font-size:23.3px;color:#5b8a2a;">1%</div>
<div class="t" style="right:1992.5px;text-align:right;top:1383.8px;font-size:23.3px;color:#3f4e4e;">1,315,455</div>
<div class="t" style="right:1638.5px;text-align:right;top:1383.8px;font-size:23.3px;color:#3f4e4e;">66</div>
<div class="t" style="right:1565.5px;text-align:right;top:1383.8px;font-size:23.3px;color:#5b8a2a;">0%</div>
<div class="t" style="right:1177.3px;text-align:right;top:1383.8px;font-size:23.3px;color:#3f4e4e;">14,728.57</div>
<div class="t" style="right:697.0px;text-align:right;top:1383.8px;font-size:23.3px;color:#3f4e4e;">14,736.20</div>
<div class="t" style="right:38.7px;text-align:right;top:1383.8px;font-size:23.3px;color:#3f4e4e;">0.005%</div>
<div style="position:absolute;left:0.0px;top:1478.0px;width:3454.0px;height:2.0px;background:#ebebeb;"></div>
<div class="t" style="left:48.9px;top:1439.8px;font-size:23.3px;color:#3f4e4e;"><span style="color:#2f6fa0">DE</span> <span style="color:#3f4e4e;margin-left:1px">Germany</span></div>
<div class="t" style="right:2873.0px;text-align:right;top:1439.2px;font-size:24px;color:#a8384e;font-weight:700;">±2%</div>
<div class="t" style="right:2448.4px;text-align:right;top:1439.8px;font-size:23.3px;color:#3f4e4e;">818,037</div>
<div class="t" style="right:2376.0px;text-align:right;top:1439.8px;font-size:23.3px;color:#5b8a2a;">1%</div>
<div class="t" style="right:1992.5px;text-align:right;top:1439.8px;font-size:23.3px;color:#3f4e4e;">888,592</div>
<div class="t" style="right:1638.5px;text-align:right;top:1439.8px;font-size:23.3px;color:#3f4e4e;">32</div>
<div class="t" style="right:1565.5px;text-align:right;top:1439.8px;font-size:23.3px;color:#5b8a2a;">0%</div>
<div class="t" style="right:1177.3px;text-align:right;top:1439.8px;font-size:23.3px;color:#3f4e4e;">9,658.95</div>
<div class="t" style="right:697.0px;text-align:right;top:1439.8px;font-size:23.3px;color:#3f4e4e;">9,662.94</div>
<div class="t" style="right:38.7px;text-align:right;top:1439.8px;font-size:23.3px;color:#3f4e4e;">0.004%</div>
<div style="position:absolute;left:0.0px;top:1534.0px;width:3454.0px;height:2.0px;background:#ebebeb;"></div>
<div class="t" style="left:48.9px;top:1495.8px;font-size:23.3px;color:#3f4e4e;"><span style="color:#2f6fa0">BE</span> <span style="color:#3f4e4e;margin-left:1px">Belgium</span></div>
<div class="t" style="right:2873.0px;text-align:right;top:1495.2px;font-size:24px;color:#a8384e;font-weight:700;">±2%</div>
<div class="t" style="right:2448.4px;text-align:right;top:1495.8px;font-size:23.3px;color:#3f4e4e;">556,644</div>
<div class="t" style="right:2376.0px;text-align:right;top:1495.8px;font-size:23.3px;color:#5b8a2a;">1%</div>
<div class="t" style="right:1992.5px;text-align:right;top:1495.8px;font-size:23.3px;color:#3f4e4e;">582,002</div>
<div class="t" style="right:1638.5px;text-align:right;top:1495.8px;font-size:23.3px;color:#3f4e4e;">31</div>
<div class="t" style="right:1565.5px;text-align:right;top:1495.8px;font-size:23.3px;color:#5b8a2a;">0%</div>
<div class="t" style="right:1177.3px;text-align:right;top:1495.8px;font-size:23.3px;color:#3f4e4e;">6,667.14</div>
<div class="t" style="right:697.0px;text-align:right;top:1495.8px;font-size:23.3px;color:#3f4e4e;">6,667.51</div>
<div class="t" style="right:38.7px;text-align:right;top:1495.8px;font-size:23.3px;color:#3f4e4e;">0.005%</div>
<div style="position:absolute;left:0.0px;top:1590.0px;width:3454.0px;height:2.0px;background:#ebebeb;"></div>
<div class="t" style="left:48.9px;top:1551.8px;font-size:23.3px;color:#3f4e4e;"><span style="color:#2f6fa0">ES</span> <span style="color:#3f4e4e;margin-left:1px">Spain</span></div>
<div class="t" style="right:2873.0px;text-align:right;top:1551.2px;font-size:24px;color:#a8384e;font-weight:700;">±2%</div>
<div class="t" style="right:2448.4px;text-align:right;top:1551.8px;font-size:23.3px;color:#3f4e4e;">505,674</div>
<div class="t" style="right:2376.0px;text-align:right;top:1551.8px;font-size:23.3px;color:#5b8a2a;">1%</div>
<div class="t" style="right:1992.5px;text-align:right;top:1551.8px;font-size:23.3px;color:#3f4e4e;">722,981</div>
<div class="t" style="right:1638.5px;text-align:right;top:1551.8px;font-size:23.3px;color:#3f4e4e;">553</div>
<div class="t" style="right:1565.5px;text-align:right;top:1551.8px;font-size:23.3px;color:#5b8a2a;">0%</div>
<div class="t" style="right:1177.3px;text-align:right;top:1551.8px;font-size:23.3px;color:#3f4e4e;">2,402.74</div>
<div class="t" style="right:697.0px;text-align:right;top:1551.8px;font-size:23.3px;color:#3f4e4e;">2,764.67</div>
<div class="t" style="right:38.7px;text-align:right;top:1551.8px;font-size:23.3px;color:#3f4e4e;">0.109%</div>
<div style="position:absolute;left:0.0px;top:1646.0px;width:3454.0px;height:2.0px;background:#ebebeb;"></div>
<div class="t" style="left:48.9px;top:1607.8px;font-size:23.3px;color:#2f6fa0;">(empty value)</div>
<div class="t" style="right:2873.0px;text-align:right;top:1607.2px;font-size:24px;color:#a8384e;font-weight:700;">±4%</div>
<div class="t" style="right:2448.4px;text-align:right;top:1607.8px;font-size:23.3px;color:#3f4e4e;">211,193</div>
<div class="t" style="right:2376.0px;text-align:right;top:1607.8px;font-size:23.3px;color:#5b8a2a;">0%</div>
<div class="t" style="right:1992.5px;text-align:right;top:1607.8px;font-size:23.3px;color:#3f4e4e;">817,215</div>
<div class="t" style="right:1638.5px;text-align:right;top:1607.8px;font-size:23.3px;color:#3f4e4e;">2,853</div>
<div class="t" style="right:1565.5px;text-align:right;top:1607.8px;font-size:23.3px;color:#5b8a2a;">0%</div>
<div class="t" style="right:1177.3px;text-align:right;top:1607.8px;font-size:23.3px;color:#3f4e4e;">169.10</div>
<div class="t" style="right:697.0px;text-align:right;top:1607.8px;font-size:23.3px;color:#3f4e4e;">233.88</div>
<div class="t" style="right:38.7px;text-align:right;top:1607.8px;font-size:23.3px;color:#3f4e4e;">1.351%</div>
<div style="position:absolute;left:0.0px;top:1702.0px;width:3454.0px;height:2.0px;background:#ebebeb;"></div>
<div class="t" style="left:48.9px;top:1663.8px;font-size:23.3px;color:#3f4e4e;"><span style="color:#2f6fa0">MX</span> <span style="color:#3f4e4e;margin-left:1px">Mexico</span></div>
<div class="t" style="right:2873.0px;text-align:right;top:1663.2px;font-size:24px;color:#a8384e;font-weight:700;">±4%</div>
<div class="t" style="right:2448.4px;text-align:right;top:1663.8px;font-size:23.3px;color:#3f4e4e;">200,401</div>
<div class="t" style="right:2376.0px;text-align:right;top:1663.8px;font-size:23.3px;color:#5b8a2a;">0%</div>
<div class="t" style="right:1992.5px;text-align:right;top:1663.8px;font-size:23.3px;color:#3f4e4e;">243,100</div>
<div class="t" style="right:1638.5px;text-align:right;top:1663.8px;font-size:23.3px;color:#3f4e4e;">3,013</div>
<div class="t" style="right:1565.5px;text-align:right;top:1663.8px;font-size:23.3px;color:#5b8a2a;">0%</div>
<div class="t" style="right:1177.3px;text-align:right;top:1663.8px;font-size:23.3px;color:#3f4e4e;">161.53</div>
<div class="t" style="right:697.0px;text-align:right;top:1663.8px;font-size:23.3px;color:#3f4e4e;">218.00</div>
<div class="t" style="right:38.7px;text-align:right;top:1663.8px;font-size:23.3px;color:#3f4e4e;">1.504%</div>
<div style="position:absolute;left:0.0px;top:1704.0px;width:3454.0px;height:54.0px;background:#f4f4f4;"></div>
<div style="position:absolute;left:0.0px;top:1758.0px;width:3454.0px;height:2.0px;background:#ebebeb;"></div>
<div class="t" style="left:48.9px;top:1719.8px;font-size:23.3px;color:#3f4e4e;"><span style="color:#2f6fa0">AU</span> <span style="color:#3f4e4e;margin-left:1px">Australia</span></div>
<div class="t" style="right:2873.0px;text-align:right;top:1719.2px;font-size:24px;color:#a8384e;font-weight:700;">±4%</div>
<div class="t" style="right:2448.4px;text-align:right;top:1719.8px;font-size:23.3px;color:#3f4e4e;">154,157</div>
<div class="t" style="right:2376.0px;text-align:right;top:1719.8px;font-size:23.3px;color:#5b8a2a;">0%</div>
<div class="t" style="right:1992.5px;text-align:right;top:1719.8px;font-size:23.3px;color:#3f4e4e;">311,924</div>
<div class="t" style="right:1638.5px;text-align:right;top:1719.8px;font-size:23.3px;color:#3f4e4e;">1,815</div>
<div class="t" style="right:1565.5px;text-align:right;top:1719.8px;font-size:23.3px;color:#5b8a2a;">0%</div>
<div class="t" style="right:1177.3px;text-align:right;top:1719.8px;font-size:23.3px;color:#3f4e4e;">89.43</div>
<div class="t" style="right:697.0px;text-align:right;top:1719.8px;font-size:23.3px;color:#3f4e4e;">126.89</div>
<div class="t" style="right:38.7px;text-align:right;top:1719.8px;font-size:23.3px;color:#3f4e4e;">1.177%</div>
</body></html>
